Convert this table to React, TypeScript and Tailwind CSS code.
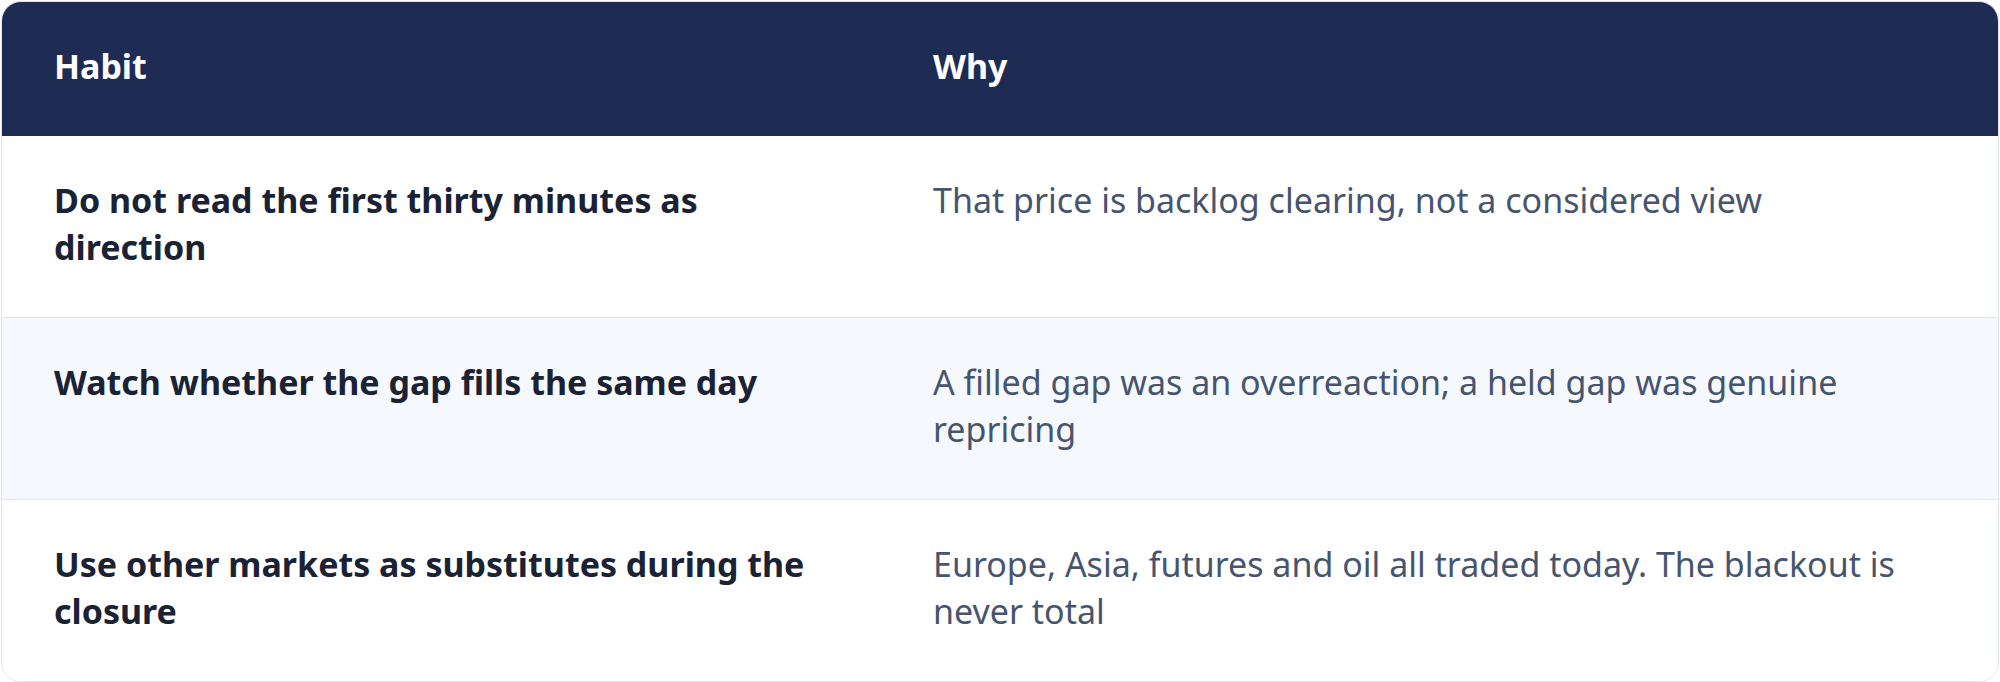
const rows = [
  {
    habit: "Do not read the first thirty minutes as direction",
    why: "That price is backlog clearing, not a considered view",
  },
  {
    habit: "Watch whether the gap fills the same day",
    why: "A filled gap was an overreaction; a held gap was genuine repricing",
  },
  {
    habit: "Use other markets as substitutes during the closure",
    why: "Europe, Asia, futures and oil all traded today. The blackout is never total",
  },
];

export default function App() {
  return (
    <div className="p-px bg-white font-['Noto_Sans','Noto_Sans_CJK_KR',sans-serif]">
      <div className="overflow-hidden rounded-[20px] border border-[#dfe5ef] bg-white">
        <table className="w-full table-fixed border-collapse text-left">
          <colgroup>
            <col className="w-[879px]" />
            <col />
          </colgroup>
          <thead>
            <tr className="bg-[#1e2b53]">
              <th className="px-[52px] pt-[41px] pb-[47px] text-[34px] leading-[46px] font-bold text-white">Habit</th>
              <th className="px-[52px] pt-[41px] pb-[47px] text-[34px] leading-[46px] font-bold text-white">Why</th>
            </tr>
          </thead>
          <tbody>
            {rows.map((r, i) => (
              <tr
                key={r.habit}
                className={`${i % 2 === 1 ? "bg-[#f5f8fd]" : "bg-white"} ${
                  i < rows.length - 1 ? "border-b border-[#e0e6f0]" : ""
                }`}
              >
                <td className="px-[52px] pt-[41px] pb-[47px] align-top text-[34px] leading-[46.5px] font-bold text-[#1a2234]">
                  {r.habit}
                </td>
                <td className="px-[52px] pt-[41px] pb-[47px] align-top text-[34px] leading-[46.5px] text-[#47546e]">
                  {r.why}
                </td>
              </tr>
            ))}
          </tbody>
        </table>
      </div>
    </div>
  );
}
